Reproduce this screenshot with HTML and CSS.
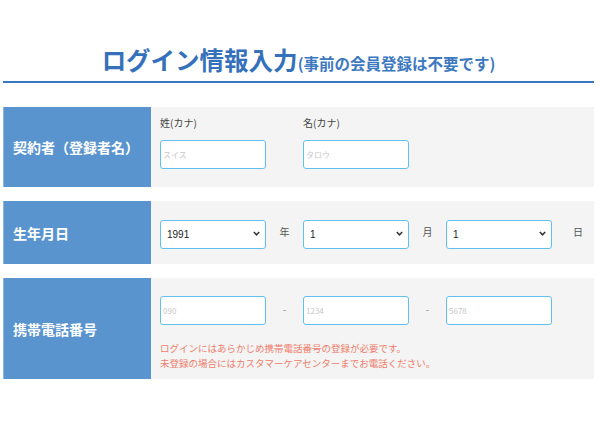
FILE: index.html
```html
<!DOCTYPE html>
<html lang="ja">
<head>
<meta charset="utf-8">
<title>ログイン情報入力</title>
<link rel="stylesheet" href="styles.css">
</head>
<body>
<div class="page">
  <h1 class="title"><span class="title-main">ログイン情報入力</span><span class="title-sub">(事前の会員登録は不要です)</span></h1>

  <div class="form">
    <div class="row row-name">
      <div class="head">契約者（登録者名）</div>
      <div class="body">
        <div class="field">
          <div class="field-label">姓(カナ)</div>
          <input class="text-input" type="text" placeholder="スイス">
        </div>
        <div class="field">
          <div class="field-label">名(カナ)</div>
          <input class="text-input" type="text" placeholder="タロウ">
        </div>
      </div>
    </div>

    <div class="row row-birth">
      <div class="head">生年月日</div>
      <div class="body inline">
        <span class="select-wrap"><select class="select"><option>1991</option></select><svg class="chev" width="7" height="5" viewBox="0 0 7 5"><path d="M0.8 1 L3.5 3.8 L6.2 1" fill="none" stroke="#333" stroke-width="1.5"/></svg></span>
        <span class="unit">年</span>
        <span class="select-wrap"><select class="select"><option>1</option></select><svg class="chev" width="7" height="5" viewBox="0 0 7 5"><path d="M0.8 1 L3.5 3.8 L6.2 1" fill="none" stroke="#333" stroke-width="1.5"/></svg></span>
        <span class="unit">月</span>
        <span class="select-wrap"><select class="select"><option>1</option></select><svg class="chev" width="7" height="5" viewBox="0 0 7 5"><path d="M0.8 1 L3.5 3.8 L6.2 1" fill="none" stroke="#333" stroke-width="1.5"/></svg></span>
        <span class="unit unit-last">日</span>
      </div>
    </div>

    <div class="row row-phone">
      <div class="head">携帯電話番号</div>
      <div class="body">
        <div class="inline">
          <input class="text-input" type="text" placeholder="090">
          <span class="unit dash">-</span>
          <input class="text-input" type="text" placeholder="1234">
          <span class="unit dash">-</span>
          <input class="text-input" type="text" placeholder="5678">
        </div>
        <p class="note">ログインにはあらかじめ携帯電話番号の登録が必要です。<br>未登録の場合にはカスタマーケアセンターまでお電話ください。</p>
      </div>
    </div>
  </div>
</div>
</body>
</html>
```

FILE: styles.css
```css
html, body {
  margin: 0;
  padding: 0;
  background: #ffffff;
}

body {
  font-family: "Noto Sans CJK JP", "Noto Sans", sans-serif;
  color: #333333;
}

.page {
  padding: 0 6px 0 3px;
}

.title {
  margin: 0;
  padding-top: 42px;
  padding-bottom: 3px;
  height: 36px;
  display: flex;
  justify-content: center;
  align-items: baseline;
  line-height: 36px;
  border-bottom: 2px solid #3b76c3;
  color: #3571ba;
  font-weight: 700;
  white-space: nowrap;
}

.title-main {
  font-size: 24.5px;
}

.title-sub {
  font-size: 15.5px;
  color: #3d79bf;
}

.form {
  margin-top: 24px;
}

.row {
  display: flex;
  margin-bottom: 14px;
}

.head {
  width: 138px;
  flex: none;
  background: #5a94cf;
  color: #ffffff;
  font-size: 14px;
  font-weight: 700;
  padding-left: 9px;
  display: flex;
  align-items: center;
  border-left: 1px solid #8fb6df;
  white-space: nowrap;
}

.body {
  flex: 1;
  background: #f3f4f3;
  padding-left: 9px;
}

.row-name .body {
  display: flex;
  gap: 37px;
  padding-top: 8px;
  padding-bottom: 18px;
}

.field-label {
  font-size: 10px;
  line-height: 16px;
  margin-bottom: 8px;
  color: #444444;
}

.text-input {
  box-sizing: border-box;
  width: 106px;
  height: 29px;
  margin: 0;
  border: 1.5px solid #62c0ef;
  border-radius: 3px;
  background: #ffffff;
  padding: 0 2px;
  font-family: "Noto Sans CJK JP", "Liberation Sans", sans-serif;
  font-size: 8px;
  color: #333333;
  outline: none;
}

.text-input::placeholder {
  color: #c8c8c8;
}

.inline {
  display: flex;
  align-items: center;
}

.row-birth .body {
  padding-top: 18px;
  padding-bottom: 16px;
}

.select-wrap {
  position: relative;
  display: block;
  width: 106px;
  height: 29px;
}

.select {
  -webkit-appearance: none;
  appearance: none;
  box-sizing: border-box;
  width: 106px;
  height: 29px;
  margin: 0;
  border: 1.5px solid #62c0ef;
  border-radius: 3px;
  background-color: #ffffff;
  padding: 0 6px;
  font-family: "Liberation Sans", sans-serif;
  font-size: 10px;
  color: #222222;
  outline: none;
}

.chev {
  position: absolute;
  right: 6px;
  top: 12px;
  pointer-events: none;
}

.unit {
  width: 37px;
  text-align: center;
  font-size: 10px;
  line-height: 16px;
  color: #555555;
  margin-top: -3px;
}

.unit-last {
  width: auto;
  padding-left: 21px;
}

.dash {
  color: #999999;
  margin-top: -4px;
}

.row-phone .body {
  padding-top: 18px;
  padding-bottom: 8px;
}

.note {
  margin: 16px 0 0;
  font-size: 9.5px;
  line-height: 15px;
  color: #ef7d6c;
}
```
